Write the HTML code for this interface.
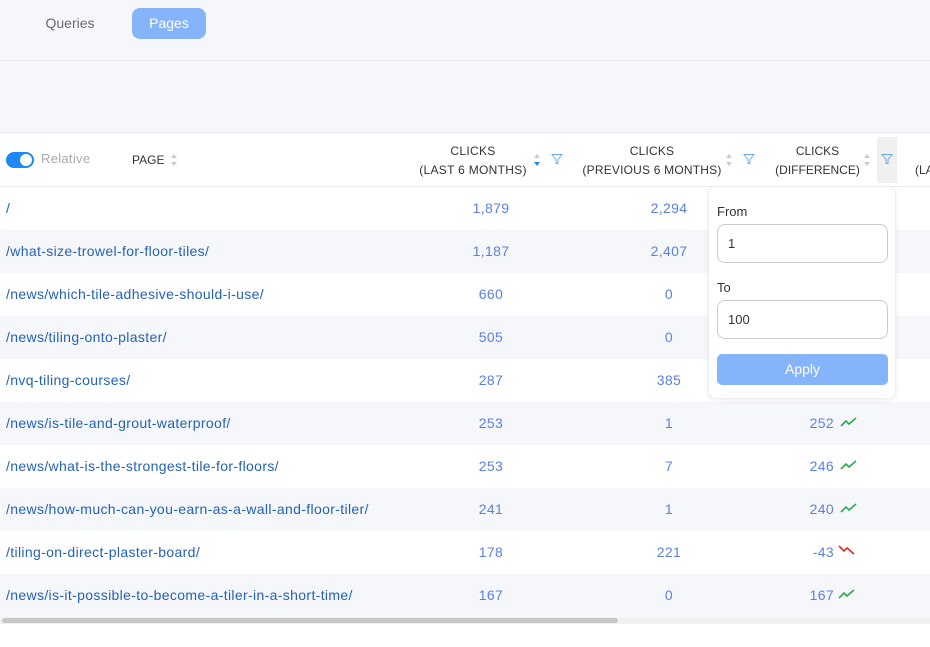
<!DOCTYPE html>
<html><head><style>
*{margin:0;padding:0;box-sizing:border-box}
body{width:930px;height:647px;overflow:hidden;background:#fff;font-family:"Liberation Sans",sans-serif;position:relative}
.top{position:absolute;left:0;top:0;width:930px;height:133px;background:#f6f7fb;border-bottom:1px solid #e6e8ef}
.top .line{position:absolute;left:0;top:60px;width:930px;height:1px;background:#e8eaf0}
.tab{position:absolute;top:8px;height:31px;line-height:31px;font-size:14px;color:#6b6b6b;text-align:center}
.hdr{position:absolute;top:133px;left:0;width:930px;height:54px;border-bottom:1px solid #e6e8f2;background:#fff}
.h{position:absolute;font-size:12px;color:#333;text-align:center;line-height:19px;top:9px;white-space:nowrap}
.row{position:absolute;left:0;width:930px;height:43px;font-size:14px;color:#2461b8}
.row.g{background:#f6f7fb}
.row span{position:absolute;top:13px;letter-spacing:0.35px;white-space:nowrap}
.n{color:#5b7fe8;text-align:center;width:80px}
.sort{position:absolute;width:8px;height:14px}
.pop{position:absolute;left:708px;top:186px;width:188px;height:213px;background:#fff;border:1px solid #eee;border-radius:8px;box-shadow:0 2px 6px rgba(0,0,0,.06)}
.pop label{position:absolute;left:8px;font-size:13px;color:#333}
.pop .in{position:absolute;left:8px;width:171px;height:39px;border:1px solid #ccc;border-radius:8px;font-size:13px;color:#333;padding:11px 10px}
</style></head><body>
<div class="top"><div class="line"></div>
<div class="tab" style="left:30px;width:80px">Queries</div>
<div class="tab" style="left:132px;width:74px;background:#85b4fb;color:#fff;border-radius:8px">Pages</div>
</div>
<div class="hdr">
<div style="position:absolute;left:6px;top:19px;width:28px;height:16px;border-radius:8px;background:#1e88f5"><div style="position:absolute;right:2px;top:2px;width:12px;height:12px;border-radius:6px;background:#fff"></div></div>
<div style="position:absolute;left:41px;top:18px;font-size:13px;color:#aaa;letter-spacing:0.3px">Relative</div>
<div style="position:absolute;left:132px;top:20px;font-size:12px;color:#333">PAGE</div>
<svg class="sort" style="left:170px;top:20px" viewBox="0 0 8 14"><path d="M4 1L7 5H1z" fill="#ccc"/><path d="M4 13L7 9H1z" fill="#ccc"/></svg>
<div class="h" style="left:410px;width:126px;letter-spacing:0.3px">CLICKS<br>(LAST 6 MONTHS)</div>
<svg class="sort" style="left:533px;top:20px" viewBox="0 0 8 14"><path d="M4 1L7 5H1z" fill="#ccc"/><path d="M4 13L7 9H1z" fill="#1e88f5"/></svg>
<svg style="position:absolute;left:551px;top:20px" width="12" height="12" viewBox="0 0 12 12"><path d="M1 1.5H11L7 6.5V10.5L5 10.5V6.5Z" fill="none" stroke="#6aa7f5" stroke-width="1"/></svg>
<div class="h" style="left:582px;width:140px;letter-spacing:0.2px">CLICKS<br>(PREVIOUS 6 MONTHS)</div>
<svg class="sort" style="left:725px;top:20px" viewBox="0 0 8 14"><path d="M4 1L7 5H1z" fill="#ccc"/><path d="M4 13L7 9H1z" fill="#ccc"/></svg>
<svg style="position:absolute;left:743px;top:20px" width="12" height="12" viewBox="0 0 12 12"><path d="M1 1.5H11L7 6.5V10.5L5 10.5V6.5Z" fill="none" stroke="#6aa7f5" stroke-width="1"/></svg>
<div class="h" style="left:770px;width:95px">CLICKS<br>(DIFFERENCE)</div>
<svg class="sort" style="left:863px;top:20px" viewBox="0 0 8 14"><path d="M4 1L7 5H1z" fill="#ccc"/><path d="M4 13L7 9H1z" fill="#ccc"/></svg>
<div style="position:absolute;left:877px;top:4px;width:20px;height:46px;background:#f0f0f0"></div>
<svg style="position:absolute;left:881px;top:20px" width="12" height="12" viewBox="0 0 12 12"><path d="M1 1.5H11L7 6.5V10.5L5 10.5V6.5Z" fill="none" stroke="#6aa7f5" stroke-width="1"/></svg>
<div class="h" style="left:915px;width:30px;text-align:left">&nbsp;<br>(LA</div>
</div>

<div class="row" style="top:187px"><span style="left:6px">/</span><span class="n" style="left:451px">1,879</span><span class="n" style="left:629px">2,294</span></div>
<div class="row g" style="top:230px"><span style="left:6px">/what-size-trowel-for-floor-tiles/</span><span class="n" style="left:451px">1,187</span><span class="n" style="left:629px">2,407</span></div>
<div class="row" style="top:273px"><span style="left:6px">/news/which-tile-adhesive-should-i-use/</span><span class="n" style="left:451px">660</span><span class="n" style="left:629px">0</span></div>
<div class="row g" style="top:316px"><span style="left:6px">/news/tiling-onto-plaster/</span><span class="n" style="left:451px">505</span><span class="n" style="left:629px">0</span></div>
<div class="row" style="top:359px"><span style="left:6px">/nvq-tiling-courses/</span><span class="n" style="left:451px">287</span><span class="n" style="left:629px">385</span></div>
<div class="row g" style="top:402px"><span style="left:6px">/news/is-tile-and-grout-waterproof/</span><span class="n" style="left:451px">253</span><span class="n" style="left:629px">1</span><span class="n" style="left:782px;width:52px;text-align:right">252</span><svg style="position:absolute;left:840px;top:14px" width="18" height="12"><path d="M1 10L6 5L9 8L16 2" fill="none" stroke="#2fa84f" stroke-width="1.6"/></svg></div>
<div class="row" style="top:445px"><span style="left:6px">/news/what-is-the-strongest-tile-for-floors/</span><span class="n" style="left:451px">253</span><span class="n" style="left:629px">7</span><span class="n" style="left:782px;width:52px;text-align:right">246</span><svg style="position:absolute;left:840px;top:14px" width="18" height="12"><path d="M1 10L6 5L9 8L16 2" fill="none" stroke="#2fa84f" stroke-width="1.6"/></svg></div>
<div class="row g" style="top:488px"><span style="left:6px">/news/how-much-can-you-earn-as-a-wall-and-floor-tiler/</span><span class="n" style="left:451px">241</span><span class="n" style="left:629px">1</span><span class="n" style="left:782px;width:52px;text-align:right">240</span><svg style="position:absolute;left:840px;top:14px" width="18" height="12"><path d="M1 10L6 5L9 8L16 2" fill="none" stroke="#2fa84f" stroke-width="1.6"/></svg></div>
<div class="row" style="top:531px"><span style="left:6px">/tiling-on-direct-plaster-board/</span><span class="n" style="left:451px">178</span><span class="n" style="left:629px">221</span><span class="n" style="left:782px;width:52px;text-align:right">-43</span><svg style="position:absolute;left:838px;top:13px" width="18" height="12"><path d="M1 2L6 7L9 4L16 10" fill="none" stroke="#e02a2a" stroke-width="1.6"/></svg></div>
<div class="row g" style="top:574px"><span style="left:6px">/news/is-it-possible-to-become-a-tiler-in-a-short-time/</span><span class="n" style="left:451px">167</span><span class="n" style="left:629px">0</span><span class="n" style="left:782px;width:52px;text-align:right">167</span><svg style="position:absolute;left:838px;top:14px" width="18" height="12"><path d="M1 10L6 5L9 8L16 2" fill="none" stroke="#2fa84f" stroke-width="1.6"/></svg></div>
<div style="position:absolute;left:0;top:617px;width:930px;height:7px;background:#f1f1f1"><div style="position:absolute;left:2px;top:1px;width:616px;height:5px;border-radius:3px;background:#c8c8c8"></div></div>

<div class="pop">
<label style="top:17px">From</label>
<div class="in" style="top:37px">1</div>
<label style="top:93px">To</label>
<div class="in" style="top:113px">100</div>
<div style="position:absolute;left:8px;top:167px;width:171px;height:31px;border-radius:5px;background:#85b4fb;color:#fff;font-size:14px;text-align:center;line-height:31px">Apply</div>
</div>
</body></html>
